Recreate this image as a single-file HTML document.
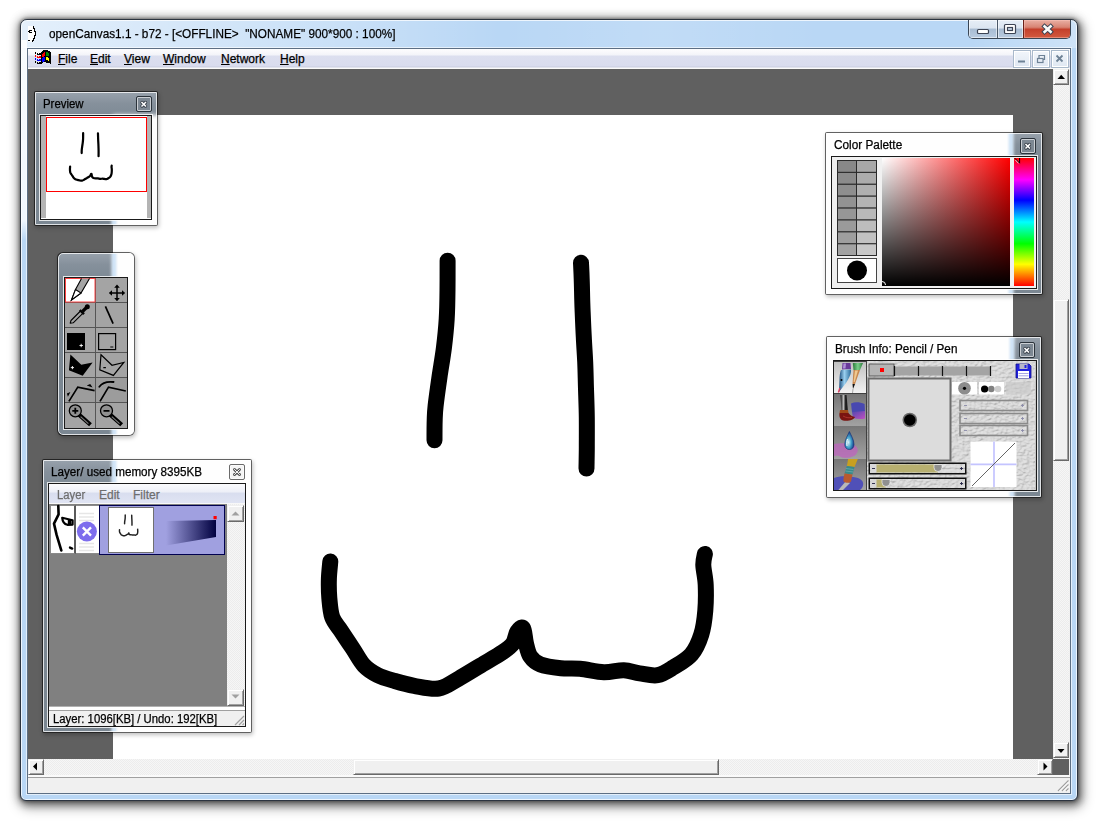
<!DOCTYPE html>
<html><head><meta charset="utf-8">
<style>
*{margin:0;padding:0;box-sizing:border-box}
html,body{width:1100px;height:829px;overflow:hidden;background:#fff;font-family:"Liberation Sans",sans-serif}
#title,.mi,.pt{-webkit-text-stroke:.25px currentColor}
.a{position:absolute}
#win{left:20px;top:19px;width:1058px;height:782px;border:1px solid #2c3440;border-radius:7px 7px 6px 6px;background:#b9d7f5;
 box-shadow:inset 0 0 0 1px rgba(255,255,255,.75),0 0 3px 1px rgba(0,0,0,.3),0 0 10px 2px rgba(0,0,0,.22),2px 3px 6px 1px rgba(0,0,0,.25),2px 4px 12px 3px rgba(0,0,0,.35)}
#tg{left:21px;top:20px;width:1056px;height:28px;border-radius:6px 6px 0 0;background:linear-gradient(90deg,rgba(255,255,255,.62) 0,rgba(255,255,255,.45) 120px,rgba(255,255,255,.22) 330px,rgba(255,255,255,0) 480px,rgba(255,255,255,.12) 640px,rgba(255,255,255,0) 800px,rgba(255,255,255,0) 950px,rgba(255,255,255,.3) 1056px)}
#wl{left:21px;top:40px;width:6px;height:200px;background:linear-gradient(180deg,rgba(255,255,255,.9) 0,rgba(255,255,255,.8) 180px,rgba(255,255,255,0) 200px)}
#title{left:49px;top:26px;font-size:13px;color:#000;white-space:pre;transform-origin:0 0;transform:scaleX(0.905)}
#client{left:27px;top:48px;width:1044px;height:746px;border:1px solid #5d6f84;background:#f0f0f0;box-shadow:0 0 0 1px rgba(255,255,255,.6)}
#menu{left:28px;top:49px;width:1042px;height:20px;background:linear-gradient(180deg,#fdfdfe 0,#f3f4f9 6px,#dcdfef 7px,#d9dcee 17px,#c9cde0 18px,#fafafa 19px)}
.mi{position:absolute;top:52px;font-size:12px;color:#000}
.mi u{text-decoration:underline;text-underline-offset:1px}
#mdi{left:28px;top:69px;width:1025px;height:690px;background:#606060;overflow:hidden}
#canvas{left:85px;top:46px;width:900px;height:644px;background:#fff}
.sbtn{position:absolute;background:#f0f0f0;border-right:1px solid #696969;border-bottom:1px solid #696969;border-left:1px solid #f0f0f0;border-top:1px solid #f0f0f0;box-shadow:inset 1px 1px 0 #fff,inset -1px -1px 0 #a0a0a0}
.track{position:absolute;background-color:#f6f6f6;background-image:linear-gradient(45deg,#ececec 25%,transparent 25%,transparent 75%,#ececec 75%),linear-gradient(45deg,#ececec 25%,transparent 25%,transparent 75%,#ececec 75%);background-size:2px 2px;background-position:0 0,1px 1px}

.pnl{position:absolute;box-shadow:1px 2px 4px rgba(0,0,0,.25);border:1px solid rgba(0,0,0,.62);background-clip:padding-box !important;border-radius:2px;overflow:hidden;background:linear-gradient(180deg,#98a2ac 0,#85909b 12px,#7b8792 30px,#7b8792 100%)}
.pnl .glw{position:absolute;background:#fefefe;filter:blur(2.2px)}
.pnl .glb{position:absolute;background:#cfe6fb;filter:blur(1.5px);width:4px}
.pnl .hl{position:absolute;left:0;top:0;right:0;bottom:0;border:1px solid rgba(255,255,255,.75)}
.pt{position:absolute;font-size:12px;line-height:14px;color:#000;white-space:pre;transform-origin:0 0}
.cb{position:absolute;width:16px;height:16px;border:1px solid #2b333b;border-radius:2px;background:#7d8893;box-shadow:inset 0 0 0 1px rgba(255,255,255,.6)}
.cb:after{content:"";position:absolute;left:0;top:0;width:14px;height:14px}
.sunk{position:absolute;border:1px solid #1a1a1a;box-shadow:0 0 0 1px rgba(255,255,255,.8)}
</style></head><body>
<div id="win" class="a"></div>
<div id="tg" class="a"></div>
<div id="wl" class="a"></div>
<div id="title" class="a">openCanvas1.1 - b72 - [&lt;OFFLINE&gt;  "NONAME" 900*900 : 100%]</div>
<div id="client" class="a"></div>
<div id="menu" class="a"></div>
<div class="mi" style="left:58px"><u>F</u>ile</div>
<div class="mi" style="left:90px"><u>E</u>dit</div>
<div class="mi" style="left:124px"><u>V</u>iew</div>
<div class="mi" style="left:163px"><u>W</u>indow</div>
<div class="mi" style="left:221px"><u>N</u>etwork</div>
<div class="mi" style="left:280px"><u>H</u>elp</div>
<div id="mdi" class="a">
 <div id="canvas" class="a"></div>
</div>
<svg class="a" style="left:0;top:0" width="1100" height="829" viewBox="0 0 1100 829">
<g fill="none" stroke="#000" stroke-width="16" stroke-linecap="round" stroke-linejoin="round">
<path d="M447.6 260.7 C447.6 265.6 447.6 280.3 447.5 290.0 C447.4 299.7 447.3 309.3 446.7 319.0 C446.1 328.7 445.1 338.3 443.9 348.0 C442.7 357.7 440.9 367.3 439.5 377.0 C438.1 386.7 436.4 398.8 435.6 406.0 C434.8 413.2 434.9 414.3 434.7 420.0 C434.5 425.7 434.5 436.9 434.5 440.3"/>
<path d="M581.0 262.8 C581.1 265.5 581.5 271.5 581.7 279.0 C582.0 286.5 582.1 298.3 582.5 308.0 C582.9 317.7 583.3 328.0 583.8 337.0 C584.2 346.0 584.8 353.3 585.2 362.0 C585.6 370.7 585.7 379.7 586.0 389.0 C586.3 398.3 586.7 408.3 586.8 418.0 C586.9 427.7 586.8 438.6 586.8 447.0 C586.8 455.4 586.5 464.9 586.5 468.5"/>
<path d="M330.3 561.5 C330.1 564.4 329.1 572.5 328.9 578.6 C328.7 584.7 328.8 591.5 329.3 597.9 C329.9 604.3 330.3 611.7 332.2 617.2 C334.1 622.7 337.5 625.6 340.9 630.7 C344.3 635.9 348.6 642.3 352.5 648.1 C356.4 653.9 359.8 661.0 364.0 665.5 C368.2 670.0 372.5 672.5 377.6 675.1 C382.8 677.7 388.8 679.2 394.9 681.0 C401.0 682.8 406.9 684.5 414.2 685.8 C421.5 687.0 431.2 689.7 438.7 688.5 C446.2 687.3 452.0 682.3 459.0 678.4 C466.0 674.5 473.6 669.7 480.9 665.3 C488.2 660.9 497.4 655.8 502.7 652.2 C508.0 648.6 510.5 646.9 512.9 643.5 C515.3 640.1 515.6 634.3 517.3 631.8 C519.0 629.2 521.6 626.2 523.1 628.2 C524.6 630.2 524.8 638.8 526.0 643.5 C527.2 648.2 528.0 653.0 530.4 656.5 C532.8 660.0 535.4 662.5 540.5 664.5 C545.6 666.5 554.3 667.5 560.9 668.2 C567.5 668.9 572.8 668.1 580.0 668.8 C587.2 669.5 596.6 672.0 603.9 672.3 C611.2 672.5 617.8 670.1 623.8 670.3 C629.8 670.5 634.1 672.5 639.7 673.3 C645.3 674.1 652.0 676.2 657.6 675.2 C663.2 674.2 667.9 670.8 673.5 667.3 C679.1 663.8 686.8 659.9 691.4 654.4 C696.0 648.9 699.0 641.8 701.3 634.5 C703.6 627.2 704.6 618.9 705.3 610.6 C706.0 602.3 706.0 592.3 705.7 584.7 C705.4 577.1 703.4 569.9 703.3 564.8 C703.2 559.7 704.6 555.7 704.9 553.9"/>
</g></svg>

<!-- PREVIEW -->
<div class="pnl" style="left:34px;top:91px;width:124px;height:135px">
 <div class="glw" style="left:78px;top:23px;width:200px;height:200px"></div><div class="glb" style="left:77px;top:25px;height:200px"></div>
 <div class="hl"></div>
 <div class="pt" style="left:8px;top:5px;transform:scaleX(.95)">Preview</div>
 <div class="cb" style="left:101px;top:4px"><svg width="14" height="14" viewBox="0 0 14 14" style="position:absolute;left:0;top:0"><path d="M5 5.5L8.5 9M8.5 5.5L5 9" stroke="#3a424c" stroke-width="3.4" stroke-linecap="round"/><path d="M5 5.5L8.5 9M8.5 5.5L5 9" stroke="#fff" stroke-width="1.5" stroke-linecap="square"/></svg></div>
 <div class="sunk" style="left:5px;top:23px;width:112px;height:105px;background:#fff">
  <div class="a" style="left:0;top:0;width:5px;height:102px;background:#b4b4b4"></div>
  <div class="a" style="left:106px;top:0;width:4px;height:102px;background:#b4b4b4"></div>
  <div class="a" style="left:5px;top:1px;width:101px;height:75px;border:1px solid #f00"></div>
  <svg class="a" style="left:0;top:0" width="110" height="103" viewBox="41 116 110 103">
   <g transform="translate(46 117) scale(0.111) translate(-113 -115)" fill="none" stroke="#000" stroke-width="20" stroke-linecap="round" stroke-linejoin="round">
   <path d="M447.6 260.7 C447.6 265.6 447.6 280.3 447.5 290.0 C447.4 299.7 447.3 309.3 446.7 319.0 C446.1 328.7 445.1 338.3 443.9 348.0 C442.7 357.7 440.9 367.3 439.5 377.0 C438.1 386.7 436.4 398.8 435.6 406.0 C434.8 413.2 434.9 414.3 434.7 420.0 C434.5 425.7 434.5 436.9 434.5 440.3"/>
   <path d="M581.0 262.8 C581.1 265.5 581.5 271.5 581.7 279.0 C582.0 286.5 582.1 298.3 582.5 308.0 C582.9 317.7 583.3 328.0 583.8 337.0 C584.2 346.0 584.8 353.3 585.2 362.0 C585.6 370.7 585.7 379.7 586.0 389.0 C586.3 398.3 586.7 408.3 586.8 418.0 C586.9 427.7 586.8 438.6 586.8 447.0 C586.8 455.4 586.5 464.9 586.5 468.5"/>
   <path d="M330.3 561.5 C330.1 564.4 329.1 572.5 328.9 578.6 C328.7 584.7 328.8 591.5 329.3 597.9 C329.9 604.3 330.3 611.7 332.2 617.2 C334.1 622.7 337.5 625.6 340.9 630.7 C344.3 635.9 348.6 642.3 352.5 648.1 C356.4 653.9 359.8 661.0 364.0 665.5 C368.2 670.0 372.5 672.5 377.6 675.1 C382.8 677.7 388.8 679.2 394.9 681.0 C401.0 682.8 406.9 684.5 414.2 685.8 C421.5 687.0 431.2 689.7 438.7 688.5 C446.2 687.3 452.0 682.3 459.0 678.4 C466.0 674.5 473.6 669.7 480.9 665.3 C488.2 660.9 497.4 655.8 502.7 652.2 C508.0 648.6 510.5 646.9 512.9 643.5 C515.3 640.1 515.6 634.3 517.3 631.8 C519.0 629.2 521.6 626.2 523.1 628.2 C524.6 630.2 524.8 638.8 526.0 643.5 C527.2 648.2 528.0 653.0 530.4 656.5 C532.8 660.0 535.4 662.5 540.5 664.5 C545.6 666.5 554.3 667.5 560.9 668.2 C567.5 668.9 572.8 668.1 580.0 668.8 C587.2 669.5 596.6 672.0 603.9 672.3 C611.2 672.5 617.8 670.1 623.8 670.3 C629.8 670.5 634.1 672.5 639.7 673.3 C645.3 674.1 652.0 676.2 657.6 675.2 C663.2 674.2 667.9 670.8 673.5 667.3 C679.1 663.8 686.8 659.9 691.4 654.4 C696.0 648.9 699.0 641.8 701.3 634.5 C703.6 627.2 704.6 618.9 705.3 610.6 C706.0 602.3 706.0 592.3 705.7 584.7 C705.4 577.1 703.4 569.9 703.3 564.8 C703.2 559.7 704.6 555.7 704.9 553.9"/>
   </g>
  </svg>
 </div>
</div>
<!-- TOOLBOX -->
<div class="pnl" style="left:57px;top:252px;width:78px;height:184px;border-radius:6px">
 <div class="glw" style="left:55px;top:-20px;width:100px;height:300px"></div><div class="glb" style="left:54px;top:-20px;height:300px"></div>
 <div class="hl" style="border-radius:5px"></div>
 <div class="sunk" style="left:6px;top:24px;width:64px;height:152px;background:#a4a4a4">
  <svg class="a" style="left:0;top:0" width="62" height="150" viewBox="65 278 62 150">
   <g stroke="#555" stroke-width="1">
    <path d="M95.5 278V428"/>
    <path d="M65 302.5H127M65 327.5H127M65 352.5H127M65 377.5H127M65 402.5H127"/>
   </g>
   <rect x="65.5" y="278.5" width="29.5" height="23.5" fill="#fff" stroke="#f44" stroke-width="1"/>
   <!-- pencil -->
   <g fill="none" stroke="#000" stroke-width="1.1" stroke-linejoin="miter">
    <path d="M81.5 278.5 L75.5 289.5 L71.5 300 L81 293 L89.5 278.5" fill="#a4a4a4"/>
    <path d="M75.5 289.5 L81 293 L71.5 300Z" fill="#fff"/>
   </g>
   <!-- move -->
   <g stroke="#000" stroke-width="1.5" fill="#000">
    <path d="M117 287V299M111 293H123"/>
   </g>
   <path d="M117 284.5l-2.8 3.2h5.6zM117 301.2l-2.8-3.2h5.6zM108.8 293l3.2-2.8v5.6zM125.2 293l-3.2-2.8v5.6z" fill="#000"/>
   <!-- dropper -->
   <path d="M70.2 323.2 L71 320.5 L80.5 311 L82.8 313.3 L73.2 322.8Z" fill="#a4a4a4" stroke="#000" stroke-width="1.1" stroke-linejoin="round"/>
   <path d="M79.8 310 L84 314.2" stroke="#000" stroke-width="2.4"/>
   <path d="M82.5 311.5 L86.5 307.5" stroke="#000" stroke-width="3.2"/>
   <circle cx="87.3" cy="306.8" r="2.5" fill="#000"/>
   <!-- line -->
   <path d="M105.4 306.3 L113.1 323.6" stroke="#000" stroke-width="1.7"/>
   <!-- rects -->
   <rect x="67" y="333" width="18" height="17" fill="#000"/>
   <path d="M79.5 345.5h3.4M81.2 343.8v3.4" stroke="#fff" stroke-width="0.9"/>
   <rect x="98.6" y="333.6" width="17" height="16" fill="none" stroke="#000" stroke-width="1.2"/>
   <path d="M110.3 347h3" stroke="#000" stroke-width="1.2"/>
   <!-- polygons -->
   <path d="M70.4 354.5 L81.3 364.8 L92.6 362.4 L82.7 375.7 L68.9 370.3Z" fill="#000"/>
   <path d="M70.8 367.6h3.2M72.4 366v3.2" stroke="#fff" stroke-width="0.9"/>
   <path d="M101 354.8 L112 365.3 L123.8 362.4 L113.4 375.4 L99.8 369.8Z" fill="none" stroke="#000" stroke-width="1.2"/>
   <path d="M103.3 367.6h2.6" stroke="#000" stroke-width="1.1"/>
   <!-- curves -->
   <rect x="65" y="378" width="62" height="24" fill="#9c9c9c"/>
   <path d="M95.5 378V402" stroke="#555"/>
   <path d="M68.9 401.4 L77.8 387.1 L94.6 390.6" fill="none" stroke="#000" stroke-width="1.7"/>
   <path d="M66.9 393.5 L70.4 392 L67.9 396.8Z M86.7 385.6 L90.2 384.1 L92.6 387.4Z" fill="#000"/>
   <path d="M100 401.4 L108.5 387.1 L125.8 391" fill="none" stroke="#000" stroke-width="1.7"/>
   <path d="M99.3 386.8 C102 383 107 381.2 113.6 382" fill="none" stroke="#000" stroke-width="1.8" stroke-linecap="round"/>
   <!-- magnifiers -->
   <g stroke="#000" stroke-width="1.3">
    <path d="M80.3 415.8 L88.9 423.4" stroke-width="4.2" stroke-linecap="square"/>
    <path d="M80.6 416.6 L88.4 423.6" stroke="#7a7a7a" stroke-width="1.2"/>
    <circle cx="75.3" cy="410.8" r="6" fill="#909090"/>
    <path d="M111.5 415.8 L120.1 423.4" stroke-width="4.2" stroke-linecap="square"/>
    <path d="M111.8 416.6 L119.6 423.6" stroke="#7a7a7a" stroke-width="1.2"/>
    <circle cx="106.5" cy="410.8" r="6" fill="#909090"/>
   </g>
   <path d="M72.3 410.8h6M75.3 407.8v6M103.5 410.8h6" stroke="#000" stroke-width="1.8"/>
  </svg>
 </div>
</div>


<!-- LAYER -->
<div class="pnl" style="left:42px;top:459px;width:210px;height:274px">
 <div class="glw" style="left:70px;top:-20px;width:200px;height:320px"></div><div class="glb" style="left:69px;top:-20px;height:320px"></div>
 <div class="hl"></div>
 <div class="pt" style="left:8px;top:5px;transform:scaleX(.972)">Layer/ used memory 8395KB</div>
 <div class="cb" style="left:186px;top:4px;background:#f4f4f4;border-color:#6a6a6a"><svg width="14" height="14" viewBox="0 0 14 14" style="position:absolute;left:0;top:0"><path d="M4.5 4.5L9.5 9.5M9.5 4.5L4.5 9.5" stroke="#555" stroke-width="3" stroke-linecap="round"/><path d="M4.5 4.5L9.5 9.5M9.5 4.5L4.5 9.5" stroke="#f4f4f4" stroke-width="1" stroke-linecap="square"/></svg></div>
 <div class="sunk" style="left:5px;top:23px;width:198px;height:244px;background:#f0f0f0">
  <div class="a" style="left:0;top:0;width:196px;height:20px;background:linear-gradient(180deg,#fbfbfd 0,#eef0f8 40%,#d9deef 50%,#e0e4f3 100%);border-bottom:1px solid #f8f8f8"></div>
  <div class="pt" style="left:8px;top:4px;color:#6e6e6e;transform:scaleX(.94)">Layer</div>
  <div class="pt" style="left:50px;top:4px;color:#6e6e6e">Edit</div>
  <div class="pt" style="left:84px;top:4px;color:#6e6e6e">Filter</div>
  <div class="a" style="left:0;top:20px;width:178px;height:202px;background:#808080"></div>
  <div class="a" style="left:1px;top:21px;width:26px;height:49px;background:#fff;border:1px solid #8a8a8a;border-right:2px solid #5a5a5a"></div>
  <div class="a" style="left:27px;top:21px;width:23px;height:49px;background:#fff;border-top:1px solid #8a8a8a;border-bottom:1px solid #8a8a8a"></div>
  <div class="a" style="left:50px;top:21px;width:126px;height:50px;background:#a0a0e0;border:1px solid #000050"></div>
  <div class="a" style="left:59px;top:23px;width:46px;height:46px;background:#fff;border:1px solid #707070"></div>
  <svg class="a" style="left:0;top:0" width="196" height="242" viewBox="49 484 196 242">
   <g fill="none" stroke="#000" stroke-width="2.6" stroke-linecap="round" stroke-linejoin="round">
    <path d="M58.3 506 L58.6 514.3 L54 523.6 L56.6 534.9 L61.3 550.4"/>
    <path d="M62.2 517.8 L72.6 520.2 L72.6 524.6 L67.4 524.8 C64.5 524 62.6 522.5 62.2 517.8Z" stroke-width="2.2"/>
    <path d="M70 547.6 L72.2 548.6" stroke-width="2.4"/>
   </g>
   <rect x="67.8" y="520" width="3.6" height="4.4" fill="#000"/>
   <g stroke="#e6e6e6" stroke-width="1.4"><path d="M79 513.5H94M79 517H94M79 520.5H94M79 543.5H94M79 547H94M79 550.5H94"/></g>
   <circle cx="86.9" cy="531.5" r="10" fill="#7d6ded"/>
   <path d="M82.8 527.4L91 535.6M91 527.4L82.8 535.6" stroke="#fff" stroke-width="2.4"/>
   <g transform="translate(109 508) scale(0.0485) translate(-113 -115)" fill="none" stroke="#222" stroke-width="30" stroke-linecap="round" stroke-linejoin="round">
   <path d="M447.6 260.7 C447.6 265.6 447.6 280.3 447.5 290.0 C447.4 299.7 447.3 309.3 446.7 319.0 C446.1 328.7 445.1 338.3 443.9 348.0 C442.7 357.7 440.9 367.3 439.5 377.0 C438.1 386.7 436.4 398.8 435.6 406.0 C434.8 413.2 434.9 414.3 434.7 420.0 C434.5 425.7 434.5 436.9 434.5 440.3"/>
   <path d="M581.0 262.8 C581.1 265.5 581.5 271.5 581.7 279.0 C582.0 286.5 582.1 298.3 582.5 308.0 C582.9 317.7 583.3 328.0 583.8 337.0 C584.2 346.0 584.8 353.3 585.2 362.0 C585.6 370.7 585.7 379.7 586.0 389.0 C586.3 398.3 586.7 408.3 586.8 418.0 C586.9 427.7 586.8 438.6 586.8 447.0 C586.8 455.4 586.5 464.9 586.5 468.5"/>
   <path d="M330.3 561.5 C330.1 564.4 329.1 572.5 328.9 578.6 C328.7 584.7 328.8 591.5 329.3 597.9 C329.9 604.3 330.3 611.7 332.2 617.2 C334.1 622.7 337.5 625.6 340.9 630.7 C344.3 635.9 348.6 642.3 352.5 648.1 C356.4 653.9 359.8 661.0 364.0 665.5 C368.2 670.0 372.5 672.5 377.6 675.1 C382.8 677.7 388.8 679.2 394.9 681.0 C401.0 682.8 406.9 684.5 414.2 685.8 C421.5 687.0 431.2 689.7 438.7 688.5 C446.2 687.3 452.0 682.3 459.0 678.4 C466.0 674.5 473.6 669.7 480.9 665.3 C488.2 660.9 497.4 655.8 502.7 652.2 C508.0 648.6 510.5 646.9 512.9 643.5 C515.3 640.1 515.6 634.3 517.3 631.8 C519.0 629.2 521.6 626.2 523.1 628.2 C524.6 630.2 524.8 638.8 526.0 643.5 C527.2 648.2 528.0 653.0 530.4 656.5 C532.8 660.0 535.4 662.5 540.5 664.5 C545.6 666.5 554.3 667.5 560.9 668.2 C567.5 668.9 572.8 668.1 580.0 668.8 C587.2 669.5 596.6 672.0 603.9 672.3 C611.2 672.5 617.8 670.1 623.8 670.3 C629.8 670.5 634.1 672.5 639.7 673.3 C645.3 674.1 652.0 676.2 657.6 675.2 C663.2 674.2 667.9 670.8 673.5 667.3 C679.1 663.8 686.8 659.9 691.4 654.4 C696.0 648.9 699.0 641.8 701.3 634.5 C703.6 627.2 704.6 618.9 705.3 610.6 C706.0 602.3 706.0 592.3 705.7 584.7 C705.4 577.1 703.4 569.9 703.3 564.8 C703.2 559.7 704.6 555.7 704.9 553.9"/>
   </g>
   <defs><linearGradient id="wg" x1="0" x2="1" y1="0" y2="0"><stop offset="0" stop-color="#a0a0e0"/><stop offset="1" stop-color="#000040"/></linearGradient></defs>
   <path d="M166 521 L216 520 L216 537 L166 545.5Z" fill="url(#wg)"/>
   <rect x="213.5" y="516" width="3.2" height="3.2" fill="#f00"/>
  </svg>
  <div class="track" style="left:178px;top:20px;width:18px;height:202px"></div>
  <div class="sbtn" style="left:178px;top:21px;width:17px;height:17px"></div>
  <div class="sbtn" style="left:178px;top:205px;width:17px;height:17px"></div>
  <svg class="a" style="left:178px;top:21px" width="17" height="201" viewBox="0 0 17 201"><path d="M4.5 10.5L8.5 6.5L12.5 10.5Z" fill="#a0a0a0"/><path d="M4.5 189.5L8.5 193.5L12.5 189.5Z" fill="#a0a0a0"/></svg>
  <div class="a" style="left:0;top:222px;width:196px;height:4px;background:#fff;border-top:1px solid #b0b0b0"></div>
  <div class="a" style="left:0;top:226px;width:196px;height:16px;background:#f0f0f0;border-top:1px solid #a0a0a0"></div>
  <div class="pt" style="left:4px;top:228px;color:#000;transform:scaleX(.943)">Layer: 1096[KB] / Undo: 192[KB]</div>
  <svg class="a" style="left:183px;top:229px" width="13" height="13" viewBox="0 0 13 13"><path d="M12 3L3 12M12 7L7 12M12 10.5L10.5 12" stroke="#a0a0a0" stroke-width="1.2"/></svg>
 </div>
</div>


<!-- COLOR PALETTE -->
<div class="pnl" style="left:825px;top:132px;width:218px;height:163px">
 <div class="glw" style="left:-30px;top:-30px;width:216px;height:230px"></div><div class="glb" style="left:183px;top:-30px;height:230px"></div>
 <div class="hl"></div>
 <div class="pt" style="left:8px;top:5px;transform:scaleX(.983)">Color Palette</div>
 <div class="cb" style="left:194px;top:5px;background:#7d8893"><svg width="14" height="14" viewBox="0 0 14 14" style="position:absolute;left:0;top:0"><path d="M5 5.5L8.5 9M8.5 5.5L5 9" stroke="#3a424c" stroke-width="3.4" stroke-linecap="round"/><path d="M5 5.5L8.5 9M8.5 5.5L5 9" stroke="#fff" stroke-width="1.5" stroke-linecap="square"/></svg></div>
 <div class="sunk" style="left:5px;top:23px;width:206px;height:133px;background:#f0f0f0">
  <svg class="a" style="left:0;top:0" width="204" height="130" viewBox="832 157 204 130">
   <g stroke="#2a2a2a" stroke-width="1">
    <rect x="837.5" y="160.5" width="19" height="11.9" fill="#888"/>
    <rect x="856.5" y="160.5" width="20" height="11.9" fill="#a8a8a8"/>
    <rect x="837.5" y="172.4" width="19" height="11.9" fill="#8b8b8b"/>
    <rect x="856.5" y="172.4" width="20" height="11.9" fill="#acacac"/>
    <rect x="837.5" y="184.3" width="19" height="11.9" fill="#8e8e8e"/>
    <rect x="856.5" y="184.3" width="20" height="11.9" fill="#b0b0b0"/>
    <rect x="837.5" y="196.2" width="19" height="11.9" fill="#929292"/>
    <rect x="856.5" y="196.2" width="20" height="11.9" fill="#b4b4b4"/>
    <rect x="837.5" y="208.1" width="19" height="11.9" fill="#969696"/>
    <rect x="856.5" y="208.1" width="20" height="11.9" fill="#b9b9b9"/>
    <rect x="837.5" y="220" width="19" height="11.9" fill="#9a9a9a"/>
    <rect x="856.5" y="220" width="20" height="11.9" fill="#bdbdbd"/>
    <rect x="837.5" y="231.9" width="19" height="11.9" fill="#9e9e9e"/>
    <rect x="856.5" y="231.9" width="20" height="11.9" fill="#c2c2c2"/>
    <rect x="837.5" y="243.8" width="19" height="11.7" fill="#a2a2a2"/>
    <rect x="856.5" y="243.8" width="20" height="11.7" fill="#c8c8c8"/>
    <rect x="837.5" y="258.5" width="39" height="24" fill="#fff" stroke="#444"/>
   </g>
   <circle cx="857" cy="270.5" r="10" fill="#000"/>
  </svg>
  <div class="a" style="left:50px;top:1px;width:128px;height:128px;background:linear-gradient(0deg,#000,rgba(0,0,0,0)),linear-gradient(90deg,#fff,#f00)"></div>
  <div class="a" style="left:182px;top:1px;width:20px;height:128px;background:linear-gradient(180deg,#f00 0%,#f0f 17%,#00f 33%,#0ff 50%,#0f0 67%,#ff0 83%,#f00 100%)"></div>
  <svg class="a" style="left:0;top:0" width="204" height="130" viewBox="832 157 204 130">
   <path d="M1014.8 158.2 L1019.6 163.2 L1019.6 158" fill="none" stroke="#000" stroke-width="1"/>
   <path d="M1015.2 159.8 L1018.6 163.4" fill="none" stroke="#fff" stroke-width="0.8"/>
   <path d="M882 281.5 a3.5 3.5 0 0 1 3.5 3.5" fill="none" stroke="#fff" stroke-width="1"/>
  </svg>
 </div>
</div>
<!-- BRUSH INFO -->
<div class="pnl" style="left:826px;top:336px;width:216px;height:162px">
 <div class="glw" style="left:-30px;top:-30px;width:216px;height:230px"></div><div class="glb" style="left:183px;top:-30px;height:230px"></div>
 <div class="hl"></div>
 <div class="pt" style="left:8px;top:5px;transform:scaleX(.976)">Brush Info: Pencil / Pen</div>
 <div class="cb" style="left:192px;top:5px;background:#7d8893"><svg width="14" height="14" viewBox="0 0 14 14" style="position:absolute;left:0;top:0"><path d="M5 5.5L8.5 9M8.5 5.5L5 9" stroke="#3a424c" stroke-width="3.4" stroke-linecap="round"/><path d="M5 5.5L8.5 9M8.5 5.5L5 9" stroke="#fff" stroke-width="1.5" stroke-linecap="square"/></svg></div>
 <div class="sunk" style="left:6px;top:23px;width:204px;height:131px;background:#c4c4c4;overflow:hidden">
  <svg class="a" style="left:0;top:0" width="202" height="129" viewBox="834 361 202 129">
   <defs>
    <filter id="crum" x="0" y="0" width="100%" height="100%">
     <feTurbulence type="fractalNoise" baseFrequency="0.28 0.45" numOctaves="2" seed="7" result="n"/>
     <feDiffuseLighting in="n" surfaceScale="1.4" lighting-color="#e2e2e2" result="l"><feDistantLight azimuth="235" elevation="66"/></feDiffuseLighting>
    </filter>
    <linearGradient id="ic1" x1="0" y1="0" x2="0" y2="1"><stop offset="0" stop-color="#c0c0c0"/><stop offset="1" stop-color="#f2f2f2"/></linearGradient>
    <linearGradient id="ic2" x1="0" y1="0" x2="0" y2="1"><stop offset="0" stop-color="#767676"/><stop offset="1" stop-color="#a2a2a2"/></linearGradient>
   </defs>
   <rect x="866" y="361" width="169" height="129" filter="url(#crum)"/>
   <!-- icons column -->
   <defs>
    <linearGradient id="nib" x1="0" y1="0" x2="1" y2="0"><stop offset="0" stop-color="#1a4a7a"/><stop offset=".45" stop-color="#9ad0f0"/><stop offset="1" stop-color="#2a6a9a"/></linearGradient>
    <linearGradient id="grn" x1="0" y1="0" x2="1" y2="0"><stop offset="0" stop-color="#2a7a3a"/><stop offset=".5" stop-color="#7ad08a"/><stop offset="1" stop-color="#2a7a3a"/></linearGradient>
    <linearGradient id="hdl" x1="0" y1="0" x2="1" y2="0"><stop offset="0" stop-color="#111"/><stop offset=".4" stop-color="#bbb"/><stop offset=".7" stop-color="#111"/><stop offset="1" stop-color="#333"/></linearGradient>
    <linearGradient id="pnk" x1="0" y1="0" x2="1" y2="1"><stop offset="0" stop-color="#5048b0"/><stop offset="1" stop-color="#c050c0"/></linearGradient>
    <radialGradient id="drp" cx=".4" cy=".6" r=".6"><stop offset="0" stop-color="#d8f0f8"/><stop offset=".5" stop-color="#40a0c8"/><stop offset="1" stop-color="#1a3a8a"/></radialGradient>
   </defs>
   <rect x="834" y="361" width="33" height="129" fill="#404040"/>
   <rect x="834" y="362" width="32" height="31" fill="url(#ic1)"/>
   <rect x="834" y="394" width="32" height="32" fill="url(#ic2)"/>
   <rect x="834" y="426" width="32" height="33" fill="url(#ic2)"/>
   <rect x="834" y="459" width="32" height="31" fill="url(#ic2)"/>
   <!-- pen nib -->
   <path d="M842.5 363 L850.5 363 L851 369 L842 369.5Z" fill="#6a3a9a"/>
   <path d="M843.5 363.5 L846 363.5 L845.5 368.5 L843 368.5Z" fill="#b090d8"/>
   <path d="M841 370 L851 369.5 C851.5 374 849 378 846 383 L839 392 L839.5 380 C839.5 376 840 372 841 370Z" fill="url(#nib)"/>
   <circle cx="841.5" cy="380" r="1" fill="#000"/>
   <path d="M839.8 388 L838.4 392.5" stroke="#e04060" stroke-width="1.4"/>
   <!-- pencil -->
   <path d="M852.8 363 L863 363 L860 370 L853.5 370Z" fill="url(#grn)"/>
   <path d="M853.5 370 L860 370 L855 384 L852.5 384Z" fill="#c88850"/>
   <path d="M855 370.5 L858 370.5 L854.6 382 L853.6 382Z" fill="#f0c890"/>
   <path d="M852.5 384 L855 384 L853 389 Z" fill="#111"/>
   <path d="M853 389 L852.5 393" stroke="#aaa" stroke-width="1"/>
   <!-- brush -->
   <path d="M851 403.5 C855 401.5 860 402 864.6 404 L865 412 L852 412Z" fill="#4848b0"/>
   <path d="M852 412 L865 411 L865 418.5 C861 419.5 857 419 853 418Z" fill="url(#pnk)"/>
   <path d="M840.5 395 L846.5 395 L848 410.5 L841.5 410.5Z" fill="url(#hdl)"/>
   <path d="M840 410 L848 410 L848.5 413 L839.5 413Z" fill="#a04a18"/>
   <path d="M839.5 413 L848.5 413 C850 415.5 852.5 416.5 855 417 C854 420 848 421.5 843 420.5 C840 419.5 839 416.5 839.5 413Z" fill="#7a1410"/>
   <path d="M843 416 C846 418 850 418 852 417.5" stroke="#b83a30" stroke-width=".8" fill="none"/>
   <!-- drop -->
   <path d="M834 444 C840 442.5 848 443 854 445 C859 447 859 453 854 456 C850 458 846 458.5 842 457.5 L838 455.5 L834 456Z" fill="#c060c0" opacity=".7"/>
   <path d="M849.4 431.5 C848 435 844.8 439.5 844.8 444.5 C844.8 447.5 846.8 449.5 849.4 449.5 C852 449.5 854 447.5 854 444.5 C854 439.5 850.8 435 849.4 431.5Z" fill="url(#drp)" stroke="#1a3a7a" stroke-width=".7"/>
   <path d="M847.5 439 C846.8 441 846.5 443.5 847 446" stroke="#fff" stroke-width="1" fill="none"/>
   <!-- eraser pencil -->
   <path d="M834 478 C840 475.5 850 476 858 478 C864 480 865 486 860 490 L834 490Z" fill="#5050b8"/>
   <path d="M838.4 490 L846 481 L850 483 L843 490Z" fill="#b8b8b8"/>
   <path d="M848.1 459 L857.8 459 L854.5 467 L846.9 466Z" fill="#c8a020"/>
   <path d="M846.9 466 L854.5 467 L852.5 474.5 L844.5 473.5Z" fill="#3a8a8a"/>
   <path d="M846 468.5 L853.5 469.5M845.5 471 L853 472" stroke="#70b0b0" stroke-width=".7"/>
   <path d="M844.5 473.5 L852.5 474.5 L851 481.5 C849.5 483.5 845.5 483 843.5 481.5 L843.5 478Z" fill="#b85a30"/>
   <!-- tabs -->
   <rect x="869" y="364" width="25" height="12" fill="#b4b4b4" stroke="#444" stroke-width=".8"/>
   <rect x="880" y="368" width="4" height="4" fill="#f00"/>
   <rect x="894" y="366.5" width="97" height="9" fill="#a4a4a4"/>
   <path d="M894.5 366V376M918.5 366V376M942.5 366V376M966.5 366V376M990.5 366V376" stroke="#111" stroke-width="1.2"/>
   <!-- floppy -->
   <rect x="1014.5" y="362.5" width="18" height="17" fill="#d8d8d8"/>
   <path d="M1016 364 H1029 L1031 366 V378 H1016Z" fill="#2222dd" stroke="#10108a" stroke-width=".8"/>
   <rect x="1019.5" y="364" width="8" height="5" fill="#b8b8c8"/>
   <rect x="1024.5" y="365" width="2" height="3" fill="#2222dd"/>
   <rect x="1018" y="371" width="11" height="7" fill="#fff"/>
   <path d="M1018.5 373.5H1028.5M1018.5 375.8H1028.5" stroke="#9090e0" stroke-width=".8"/>
   <!-- preview box -->
   <rect x="868.5" y="378.5" width="82" height="82" fill="#dcdcdc" stroke="#6c6c6c" stroke-width="2"/>
   <circle cx="909.8" cy="420" r="7.3" fill="#6a6a6a"/>
   <circle cx="909.8" cy="420" r="5.8" fill="#000"/>
   <!-- shape boxes -->
   <rect x="952" y="382" width="25" height="12.5" fill="#fff"/>
   <circle cx="964.5" cy="388.3" r="6.3" fill="#8c8c8c"/>
   <circle cx="964.5" cy="388.3" r="1.6" fill="#000"/>
   <rect x="979" y="382" width="25" height="12.5" fill="#fff"/>
   <circle cx="984.6" cy="389" r="3.6" fill="#000"/>
   <circle cx="991.3" cy="389" r="3.3" fill="#808080"/>
   <circle cx="998" cy="389" r="3.3" fill="#cdcdcd"/>
   <rect x="1006" y="382" width="25" height="12.5" fill="#c8c8c8" opacity=".6"/>
   <!-- 3 recessed sliders -->
   <g fill="none" stroke="#8a8a8a" stroke-width="1.6">
    <rect x="960" y="400.5" width="67.5" height="10"/>
    <rect x="960" y="413.5" width="67.5" height="10"/>
    <rect x="960" y="425.5" width="67.5" height="10"/>
   </g>
   <path d="M964 405.5h3M964 418.5h3M964 430.5h3" stroke="#8a8aa8" stroke-width=".9"/>
   <path d="M1021 405.5h3M1022.5 404v3M1021 418.5h3M1022.5 417v3M1021 430.5h3M1022.5 429v3" stroke="#8a8aa8" stroke-width=".9"/>
   <!-- curve box -->
   <rect x="970.5" y="441.5" width="46" height="45.5" fill="#fff"/>
   <path d="M994 441.5V487M970.5 464.4H1016.5" stroke="#c4c4ff" stroke-width="1.7"/>
   <path d="M972 486 L1015 443" stroke="#555" stroke-width=".9"/>
   <!-- sliders -->
   <rect x="868.5" y="462.5" width="98" height="12" fill="#111"/>
   <rect x="870.5" y="464.5" width="94" height="8" fill="#c8c8c8" filter="url(#crum)"/>
   <rect x="876" y="464.5" width="62" height="8" fill="#b8b070"/>
   <rect x="870.5" y="464.5" width="6" height="8" fill="#d8d8d8"/>
   <path d="M872 468.5h3M960 468.5h3M961.5 467v3" stroke="#224" stroke-width=".9"/>
   <path d="M934 464.5 h8 v3 a4 4 0 0 1 -8 0z" fill="#909090" stroke="#fff" stroke-width=".6"/>
   <rect x="868.5" y="477.5" width="98" height="12" fill="#111"/>
   <rect x="870.5" y="479.5" width="94" height="8" fill="#c8c8c8" filter="url(#crum)"/>
   <rect x="876" y="479.5" width="10" height="8" fill="#b8b070"/>
   <rect x="870.5" y="479.5" width="6" height="8" fill="#d8d8d8"/>
   <path d="M872 483.5h3M960 483.5h3M961.5 482v3" stroke="#224" stroke-width=".9"/>
   <path d="M882 479.5 h8 v3 a4 4 0 0 1 -8 0z" fill="#909090" stroke="#fff" stroke-width=".6"/>
  </svg>
 </div>
</div>

<!-- vertical scrollbar -->
<div class="track" style="left:1053px;top:69px;width:16px;height:690px"></div>
<div class="sbtn" style="left:1053px;top:69px;width:16px;height:16px"></div>
<div class="sbtn" style="left:1053px;top:742px;width:16px;height:16px"></div>
<div class="sbtn" style="left:1053px;top:299px;width:16px;height:162px"></div>
<!-- horizontal scrollbar -->
<div class="track" style="left:28px;top:759px;width:1025px;height:16px"></div>
<div class="sbtn" style="left:28px;top:759px;width:16px;height:16px"></div>
<div class="sbtn" style="left:1037px;top:759px;width:16px;height:16px"></div>
<div class="sbtn" style="left:353px;top:759px;width:366px;height:16px"></div>
<div class="a" style="left:1053px;top:759px;width:16px;height:16px;background:#606060"></div>
<!-- status bar -->
<div class="a" style="left:28px;top:775px;width:1042px;height:18px;background:#f0f0f0;border-top:2px solid #fafafa"></div>
<div class="a" style="left:28px;top:777px;width:1042px;height:1px;background:#a0a0a0"></div>

<!-- title icon -->
<svg class="a" style="left:26px;top:24px" width="12" height="20" viewBox="26 24 12 20" shape-rendering="crispEdges">
 <rect x="28" y="26" width="5" height="16" fill="#fff"/>
 <rect x="33" y="29" width="1" height="10" fill="#fff"/>
 <rect x="34" y="32" width="1" height="4" fill="#fff"/>
 <g fill="#000">
 <rect x="33" y="26" width="1" height="3"/><rect x="34" y="28" width="1" height="4"/><rect x="35" y="31" width="1" height="5"/>
 <rect x="34" y="35" width="1" height="4"/><rect x="33" y="38" width="1" height="3"/><rect x="32" y="40" width="1" height="2"/>
 <rect x="29" y="30" width="3" height="1"/><rect x="28" y="31" width="2" height="1"/><rect x="29" y="32" width="3" height="1"/>
 <rect x="28" y="40" width="2" height="1"/>
 </g>
</svg>
<!-- menu icon (windows flag) -->
<svg class="a" style="left:34px;top:49px" width="18" height="16" viewBox="34 49 18 16" shape-rendering="crispEdges">
 <path d="M43 50H48V51H50V52H51V64H50V63H46V62H43V63H42V64H41V52H42V51H43Z" fill="#000"/>
 <path d="M44 52H45V56H44V57H42V54H43V53H44Z" fill="#f00"/>
 <path d="M46 52H48V53H49V56H46Z" fill="#080"/>
 <path d="M44 57H45V61H44V62H42V58H43V57Z" fill="#00f"/>
 <path d="M46 57H48V58H49V61H48V60H46Z" fill="#ff0"/>
 <rect x="35" y="52" width="1" height="2" fill="#000"/>
 <rect x="35" y="55" width="1" height="2" fill="#f00"/>
 <rect x="35" y="58" width="1" height="2" fill="#00f"/>
 <rect x="35" y="61" width="1" height="2" fill="#000"/>
 <path d="M37 53H38V54H39V53H41V55H37Z" fill="#000"/>
 <path d="M37 56H38V57H39V56H41V58H37Z" fill="#f00"/>
 <path d="M37 59H38V60H39V59H41V61H37Z" fill="#00f"/>
 <path d="M37 62H38V63H39V62H41V64H37Z" fill="#000"/>
</svg>
<!-- caption buttons -->
<div class="a" style="left:968px;top:20px;width:103px;height:19px;border:1px solid #3a4654;border-top:0;border-radius:0 0 5px 5px;overflow:hidden">
 <div class="a" style="left:0;top:0;width:28px;height:18px;background:linear-gradient(180deg,#e6eef7 0,#dbe5f0 45%,#a8bcd2 50%,#b9cbe0 100%);box-shadow:inset 0 0 0 1px rgba(255,255,255,.55)"></div>
 <div class="a" style="left:28px;top:0;width:1px;height:18px;background:#4a5868"></div>
 <div class="a" style="left:29px;top:0;width:25px;height:18px;background:linear-gradient(180deg,#e6eef7 0,#dbe5f0 45%,#a8bcd2 50%,#b9cbe0 100%);box-shadow:inset 0 0 0 1px rgba(255,255,255,.55)"></div>
 <div class="a" style="left:54px;top:0;width:1px;height:18px;background:#6a2018"></div>
 <div class="a" style="left:55px;top:0;width:48px;height:18px;background:linear-gradient(180deg,#eab0a4 0,#d88474 40%,#c4402c 52%,#d25a40 100%);box-shadow:inset 0 0 0 1px rgba(255,200,190,.45)"></div>
</div>
<svg class="a" style="left:968px;top:20px" width="104" height="20" viewBox="968 20 104 20">
 <rect x="977.5" y="29.5" width="11" height="4" rx="1" fill="#fff" stroke="#3c4454" stroke-width="1.2"/>
 <rect x="1004.5" y="24.5" width="11" height="9" rx="1" fill="#fff" stroke="#3c4454" stroke-width="1.2"/>
 <rect x="1007.5" y="27.5" width="5" height="3" fill="#c8d8e8" stroke="#3c4454" stroke-width="1.2"/>
 <path d="M1044.6 26.4 L1050.6 31.8 M1050.6 26.4 L1044.6 31.8" stroke="#3c4454" stroke-width="4.6" stroke-linecap="square"/>
 <path d="M1044.6 26.4 L1050.6 31.8 M1050.6 26.4 L1044.6 31.8" stroke="#fafafa" stroke-width="2.6" stroke-linecap="square"/>
</svg>
<!-- MDI buttons -->
<div class="a" style="left:1013px;top:50px;width:18px;height:18px;border:1px solid #a9b9cb;background:linear-gradient(180deg,#f2f6fb,#dfe7f2);box-shadow:inset 0 0 0 1px #fff"></div>
<div class="a" style="left:1032px;top:50px;width:18px;height:18px;border:1px solid #a9b9cb;background:linear-gradient(180deg,#f2f6fb,#dfe7f2);box-shadow:inset 0 0 0 1px #fff"></div>
<div class="a" style="left:1051px;top:50px;width:18px;height:18px;border:1px solid #a9b9cb;background:linear-gradient(180deg,#f2f6fb,#dfe7f2);box-shadow:inset 0 0 0 1px #fff"></div>
<svg class="a" style="left:1013px;top:50px" width="56" height="18" viewBox="1013 50 56 18">
 <path d="M1018 61.5h7" stroke="#6e8296" stroke-width="2"/>
 <rect x="1037.5" y="58.5" width="5.5" height="4" fill="none" stroke="#6e8296" stroke-width="1.2"/>
 <path d="M1039 58.5V55.5H1044.5V59.5H1043" fill="none" stroke="#6e8296" stroke-width="1.2"/>
 <path d="M1056.5 55.5l6 6m0-6l-6 6" stroke="#6e8296" stroke-width="1.8"/>
</svg>
<!-- scroll arrows -->
<svg class="a" style="left:0;top:0" width="1100" height="829" viewBox="0 0 1100 829">
 <path d="M1057.5 79 L1061.2 74.8 L1065 79Z" fill="#000"/>
 <path d="M1057.5 749 L1061 753 L1064.5 749Z" fill="#000"/>
 <path d="M37 762.5 L33 766.5 L37 770.5Z" fill="#000"/>
 <path d="M1043.5 762.5 L1047.5 766.5 L1043.5 770.5Z" fill="#000"/>
 <path d="M1068.5 780.5 L1058 791 M1068.5 784.5 L1062 791 M1068.5 788.5 L1066 791" stroke="#a0a0a0" stroke-width="1.3"/>
 <path d="M1069 781.5 L1059 791.5 M1069 785.5 L1063 791.5 M1069 789.5 L1067 791.5" stroke="#fff" stroke-width="1"/>
</svg>
</body></html>
